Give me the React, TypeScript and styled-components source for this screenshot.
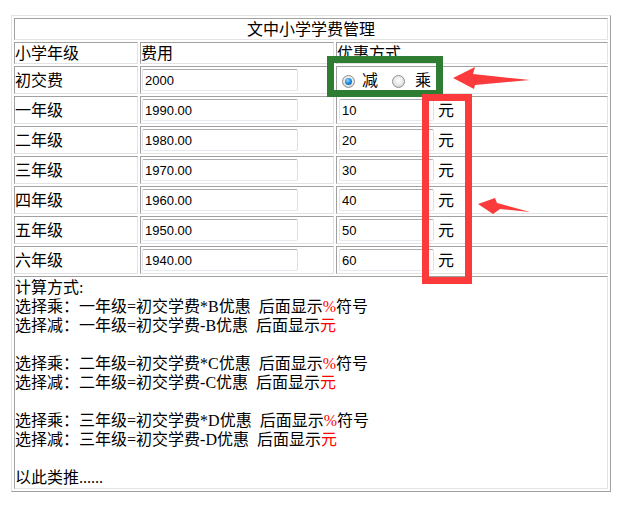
import React from 'react';
import styled, { createGlobalStyle } from 'styled-components';

const GlobalStyle = createGlobalStyle`
  html, body {
    margin: 0;
    padding: 0;
    background: #ffffff;
  }
`;

const Page = styled.div`
  position: relative;
  width: 634px;
  height: 525px;
  padding: 15px 0 0 11px;
  box-sizing: border-box;
`;

const Sheet = styled.table`
  width: 600px;
  border-collapse: separate;
  border-spacing: 2px;
  border: 1px solid;
  border-color: #e3e3e3 #a0a0a0 #a0a0a0 #e3e3e3;
  font-family: "Liberation Serif", "Noto Sans CJK SC", serif;
  font-size: 16px;
  line-height: 19px;
  color: #000;
`;

const Cell = styled.td<{ $w?: number; $h?: number; $center?: boolean }>`
  padding: 0;
  border: 1px solid;
  border-color: #a0a0a0 #e3e3e3 #e3e3e3 #a0a0a0;
  vertical-align: middle;
  white-space: nowrap;
  ${p => (p.$w ? `width: ${p.$w - 2}px;` : '')}
  ${p => (p.$h ? `height: ${p.$h - 2}px;` : '')}
  text-align: ${p => (p.$center ? 'center' : 'left')};
`;

const FeeInput = styled.input<{ $w: number; $ml: number }>`
  box-sizing: border-box;
  width: ${p => p.$w}px;
  height: 22px;
  margin: 0 0 0 ${p => p.$ml}px;
  padding: 1px 2px;
  border: 1px solid;
  border-color: #abadb3 #dbdfe6 #e3e9ef #e2e3ea;
  border-radius: 2px;
  font-family: "Liberation Sans", Arial, sans-serif;
  font-size: 13px;
  color: #000;
  vertical-align: middle;
  outline: none;
`;

const Unit = styled.span`
  margin-left: 4px;
  vertical-align: middle;
`;

const RadioGroup = styled.div`
  display: flex;
  align-items: center;
`;

const Radio = styled.input<{ $ml: number }>`
  appearance: none;
  box-sizing: border-box;
  width: 13px;
  height: 13px;
  margin: 2px 0 0 ${p => p.$ml}px;
  border-radius: 50%;
  border: 1px solid #8e8f8f;
  background: radial-gradient(circle at 50% 40%, #ffffff 0%, #e6e6e6 55%, #c9c9c9 100%);
  position: relative;

  &:checked::after {
    content: '';
    position: absolute;
    left: 2px;
    top: 2px;
    width: 7px;
    height: 7px;
    border-radius: 50%;
    background: radial-gradient(circle at 40% 35%, #8fd6ff 0%, #1f86d6 50%, #0b4f8f 100%);
  }
`;

const RadioText = styled.span<{ $ml: number }>`
  margin-left: ${p => p.$ml}px;
`;

const CalcLine = styled.div`
  min-height: 19px;
`;

const Red = styled.span`
  color: #ff0000;
`;

const Frame = styled.div<{ $x: number; $y: number; $w: number; $h: number; $color: string }>`
  position: absolute;
  left: ${p => p.$x}px;
  top: ${p => p.$y}px;
  width: ${p => p.$w}px;
  height: ${p => p.$h}px;
  box-sizing: border-box;
  border: 7px solid ${p => p.$color};
  pointer-events: none;
`;

const ArrowLayer = styled.svg`
  position: absolute;
  left: 0;
  top: 0;
  pointer-events: none;
`;

const grades = [
  { name: '一年级', fee: '1990.00', off: '10' },
  { name: '二年级', fee: '1980.00', off: '20' },
  { name: '三年级', fee: '1970.00', off: '30' },
  { name: '四年级', fee: '1960.00', off: '40' },
  { name: '五年级', fee: '1950.00', off: '50' },
  { name: '六年级', fee: '1940.00', off: '60' },
];

const rules = [
  { grade: '一年级', key: 'B' },
  { grade: '二年级', key: 'C' },
  { grade: '三年级', key: 'D' },
];

const App: React.FC = () => {
  return (
    <Page>
      <GlobalStyle />
      <Sheet>
        <tbody>
          <tr>
            <Cell colSpan={3} $h={22} $center>文中小学学费管理</Cell>
          </tr>
          <tr>
            <Cell $w={124} $h={22}>小学年级</Cell>
            <Cell $w={194}>费用</Cell>
            <Cell $w={272}>优惠方式</Cell>
          </tr>
          <tr>
            <Cell $h={28}>初交费</Cell>
            <Cell>
              <FeeInput $w={156} $ml={1} defaultValue="2000" />
            </Cell>
            <Cell>
              <RadioGroup>
                <Radio type="radio" name="mode" $ml={5} defaultChecked />
                <RadioText $ml={7}>减</RadioText>
                <Radio type="radio" name="mode" $ml={14} />
                <RadioText $ml={10}>乘</RadioText>
              </RadioGroup>
            </Cell>
          </tr>
          {grades.map(g => (
            <tr key={g.name}>
              <Cell $h={28}>{g.name}</Cell>
              <Cell>
                <FeeInput $w={156} $ml={1} defaultValue={g.fee} />
              </Cell>
              <Cell>
                <FeeInput $w={95} $ml={2} defaultValue={g.off} />
                <Unit>元</Unit>
              </Cell>
            </tr>
          ))}
          <tr>
            <Cell colSpan={3} $h={213}>
              <CalcLine>计算方式:</CalcLine>
              {rules.map(r => (
                <React.Fragment key={r.key}>
                  <CalcLine>
                    选择乘：{r.grade}=初交学费*{r.key}优惠&nbsp;&nbsp;后面显示<Red>%</Red>符号
                  </CalcLine>
                  <CalcLine>
                    选择减：{r.grade}=初交学费-{r.key}优惠&nbsp;&nbsp;后面显示<Red>元</Red>
                  </CalcLine>
                  <CalcLine />
                </React.Fragment>
              ))}
              <CalcLine>以此类推......</CalcLine>
            </Cell>
          </tr>
        </tbody>
      </Sheet>

      <Frame $x={327} $y={56} $w={116} $h={41} $color="#2e7d32" />
      <Frame $x={422} $y={94} $w={50} $h={190} $color="#fb3b3b" />

      <ArrowLayer width={634} height={525} viewBox="0 0 634 525">
        <polygon
          points="453,78 475,67 473,74 530,80 475,85 474,89"
          fill="#fb3b3b"
        />
        <polygon
          points="478,204 495,198 497,203 530,212 500,209 493,214"
          fill="#fb3b3b"
        />
      </ArrowLayer>
    </Page>
  );
};

export default App;
